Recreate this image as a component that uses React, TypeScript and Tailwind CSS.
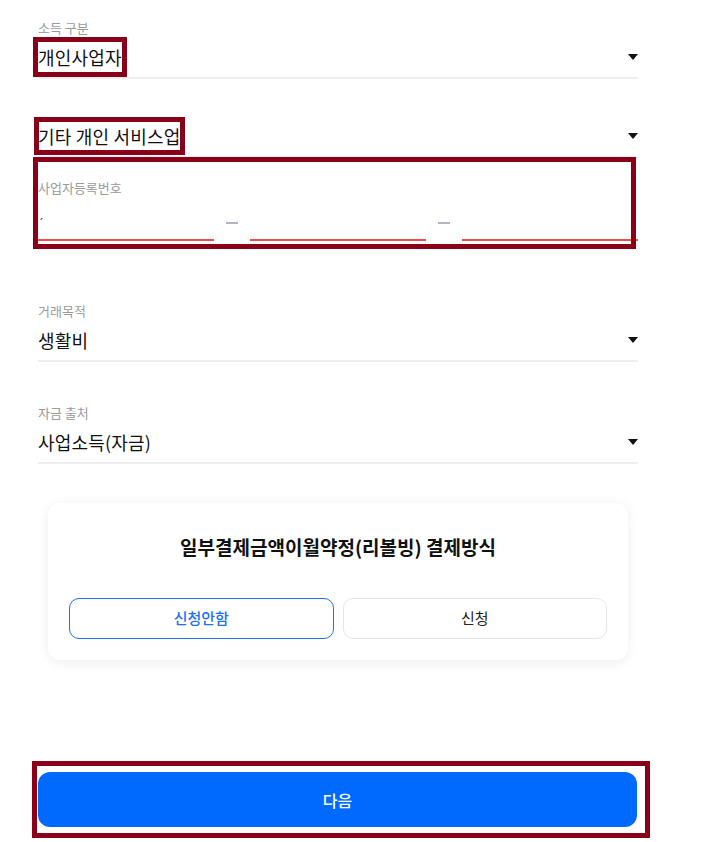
import React from "react";

const FONT = { fontFamily: '"Noto Sans CJK KR", "Noto Sans", sans-serif' };

function Caret() {
  return (
    <svg className="h-[6px] w-[10px] shrink-0" viewBox="0 0 10 6" aria-hidden="true">
      <path d="M0 0H10L5 6Z" fill="#111" />
    </svg>
  );
}

type SelectFieldProps = {
  label?: string;
  value: string;
  marked?: boolean;
  className?: string;
  markClassName?: string;
};

function SelectField({ label, value, marked, className = "", markClassName = "" }: SelectFieldProps) {
  return (
    <div className={`border-b-2 border-[#efefef] pb-[5px] ${className}`}>
      {label ? (
        <p className="h-[18px] text-[13px] leading-[18px] text-[#9a9a9a]">{label}</p>
      ) : null}
      <div className={`flex items-center justify-between ${label ? "mt-[5px]" : ""}`}>
        <span
          className={`inline-block h-[30px] text-[18px] leading-[30px] tracking-[0.2px] text-[#111] ${
            marked ? `outline-[5px] outline-solid outline-[#8a0019] ${markClassName}` : ""
          }`}
        >
          {value}
        </span>
        <Caret />
      </div>
    </div>
  );
}

function NumberSegment({ mark }: { mark?: string }) {
  return (
    <div className="relative h-[36px] flex-1 border-b-2 border-[#f24b4b]">
      {mark ? (
        <span className="absolute left-[2px] top-[4px] text-[10px] leading-none text-[#111]">{mark}</span>
      ) : null}
    </div>
  );
}

function Dash() {
  return <span className="mx-[12px] mb-[17px] h-[2px] w-[12px] bg-[#b3b6c2]" />;
}

export default function App() {
  return (
    <div className="min-h-[842px] w-full bg-white" style={FONT}>
      <div className="ml-[38px] w-[600px] pt-[19px]">
        <SelectField label="소득 구분" value="개인사업자" marked />

        <SelectField
          value="기타 개인 서비스업"
          marked
          className="mt-[42px]"
          markClassName="outline-offset-[-1px]"
        />

        <div className="relative pt-[21px]">
          <p className="text-[13px] leading-[18px] text-[#9a9a9a]">사업자등록번호</p>
          <div className="mt-[8px] flex items-end">
            <NumberSegment mark="ˏ" />
            <Dash />
            <NumberSegment />
            <Dash />
            <NumberSegment />
          </div>
          <div className="pointer-events-none absolute -left-[5px] -top-[1px] bottom-[-8px] right-[2px] border-[5px] border-[#8a0019]" />
        </div>

        <SelectField label="거래목적" value="생활비" className="mt-[61px]" />
        <SelectField label="자금 출처" value="사업소득(자금)" className="mt-[42px]" />

        <div className="mx-[10px] mt-[39px] rounded-[12px] bg-white px-[21px] pb-[21px] pt-[32px] shadow-[0_2px_12px_rgba(0,0,0,0.08)]">
          <p className="text-center text-[19px] font-bold leading-[24px] text-[#111]">
            일부결제금액이월약정(리볼빙) 결제방식
          </p>
          <div className="mt-[39px] flex gap-[9px]">
            <button className="h-[41px] flex-1 rounded-[10px] border border-[#1f6ff5] text-[15px] font-medium text-[#1f6ff5]">
              신청안함
            </button>
            <button className="h-[41px] flex-1 rounded-[10px] border border-[#e4e6ea] text-[15px] text-[#222]">
              신청
            </button>
          </div>
        </div>

        <div className="relative mt-[112px]">
          <button className="h-[55px] w-[599px] rounded-[12px] bg-[#006aff] text-[16px] font-medium text-white">
            다음
          </button>
          <div className="pointer-events-none absolute -left-[6px] -top-[11px] h-[77px] w-[618px] border-[5px] border-[#8a0019]" />
        </div>
      </div>
    </div>
  );
}
